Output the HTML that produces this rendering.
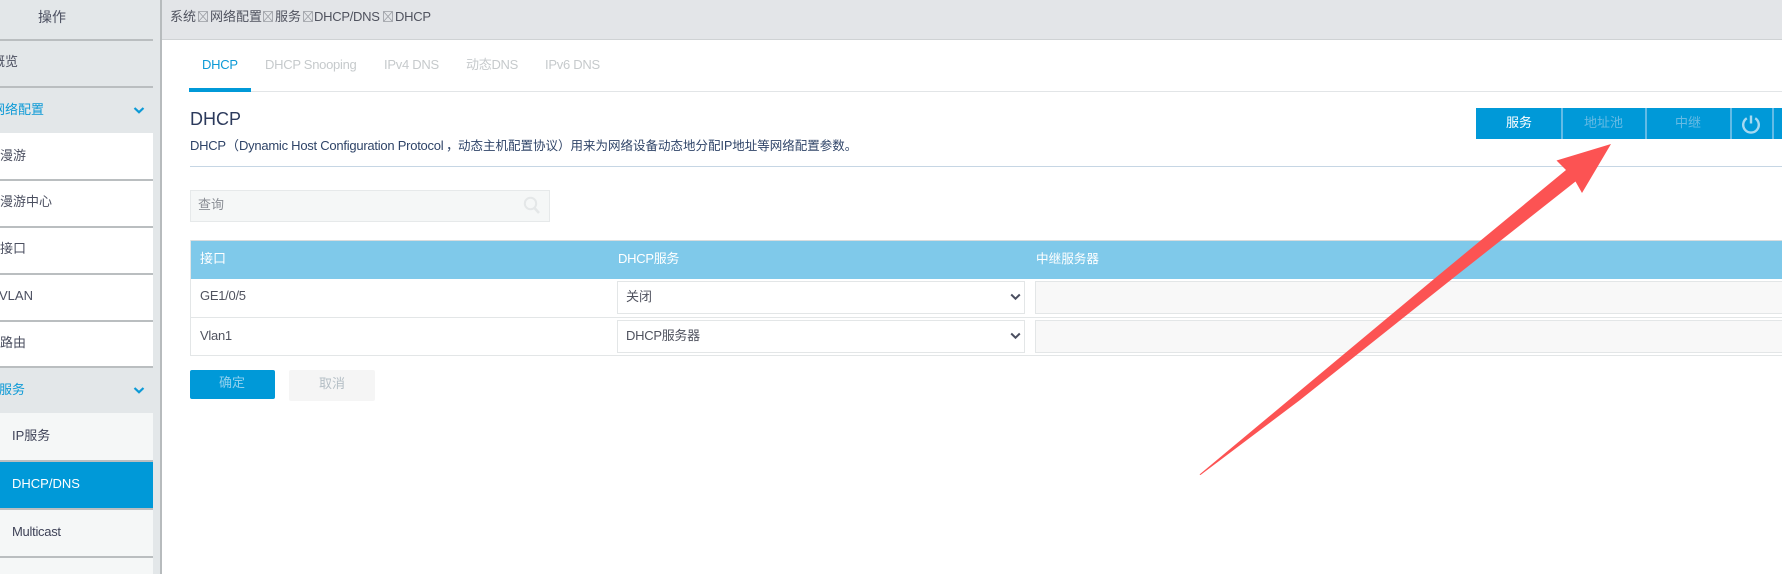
<!DOCTYPE html>
<html lang="zh">
<head>
<meta charset="utf-8">
<title>DHCP</title>
<style>
html,body{margin:0;padding:0;width:1782px;height:574px;overflow:hidden;background:#fff}
body{position:relative;font-family:"Liberation Sans","Noto Sans CJK SC",sans-serif;font-size:13px;color:#4b4f60}
.a{position:absolute}
.t{position:absolute;white-space:nowrap;line-height:20px;height:20px}
.l{letter-spacing:-.28px}
.b{position:absolute;left:0;width:153px;height:2px;background:#babec0}
.sep{position:absolute;top:108px;width:2px;height:31px;background:#62bbe6}
</style>
</head>
<body>
<!-- sidebar background -->
<div class="a" style="left:0;top:0;width:160px;height:574px;background:#e3e7e9"></div>
<div class="a" style="left:160px;top:0;width:2px;height:574px;background:#b7bbbd"></div>
<div class="a" style="left:0;top:133px;width:153px;height:187px;background:#fff"></div>
<div class="a" style="left:0;top:320px;width:153px;height:47px;background:#fff"></div>
<div class="a" style="left:0;top:413px;width:153px;height:161px;background:#f5f7f7"></div>
<div class="a" style="left:0;top:462px;width:153px;height:46px;background:#0099d8"></div>
<div class="b" style="top:39px"></div>
<div class="b" style="top:86px"></div>
<div class="b" style="top:179px"></div>
<div class="b" style="top:226px"></div>
<div class="b" style="top:273px"></div>
<div class="b" style="top:320px"></div>
<div class="b" style="top:366px"></div>
<div class="b" style="top:460px"></div>
<div class="b" style="top:508px"></div>
<div class="b" style="top:556px"></div>

<div class="t" style="left:38px;top:7px;font-size:14px">操作</div>
<div class="t" style="left:-8px;top:52px">概览</div>
<div class="t" style="left:-8px;top:100px;color:#0d9ad6">网络配置</div>
<div class="t" style="left:0;top:146px">漫游</div>
<div class="t" style="left:0;top:192px">漫游中心</div>
<div class="t" style="left:0;top:239px">接口</div>
<div class="t" style="left:-1px;top:286px">VLAN</div>
<div class="t" style="left:0;top:333px">路由</div>
<div class="t" style="left:-1px;top:380px;color:#0d9ad6">服务</div>
<div class="t" style="left:12px;top:426px;color:#3f4358">IP服务</div>
<div class="t" style="left:12px;top:474px;color:#fff">DHCP/DNS</div>
<div class="t l" style="left:12px;top:522px;color:#3f4358">Multicast</div>

<svg class="a" style="left:133px;top:106px" width="12" height="9" viewBox="0 0 12 9"><path d="M1.5 2 L6 6.2 L10.5 2" fill="none" stroke="#0d9ad6" stroke-width="2.2"/></svg>
<svg class="a" style="left:133px;top:386px" width="12" height="9" viewBox="0 0 12 9"><path d="M1.5 2 L6 6.2 L10.5 2" fill="none" stroke="#0d9ad6" stroke-width="2.2"/></svg>

<!-- top breadcrumb -->
<div class="a" style="left:162px;top:0;width:1620px;height:39px;background:#e3e5e8"></div>
<div class="a" style="left:162px;top:39px;width:1620px;height:1px;background:#cfd2d4"></div>
<div class="t" style="left:170px;top:7px;color:#50535f">系统</div>
<svg class="a" style="left:198px;top:11px" width="10" height="11" viewBox="0 0 10 11"><path d="M.5 .5H9.5V10.5H.5ZM.5 .5L9.5 10.5M9.5 .5L.5 10.5" fill="none" stroke="#9a9da3" stroke-width=".8"/></svg>
<div class="t" style="left:210px;top:7px;color:#50535f">网络配置</div>
<svg class="a" style="left:263px;top:11px" width="10" height="11" viewBox="0 0 10 11"><path d="M.5 .5H9.5V10.5H.5ZM.5 .5L9.5 10.5M9.5 .5L.5 10.5" fill="none" stroke="#9a9da3" stroke-width=".8"/></svg>
<div class="t" style="left:275px;top:7px;color:#50535f">服务</div>
<svg class="a" style="left:303px;top:11px" width="10" height="11" viewBox="0 0 10 11"><path d="M.5 .5H9.5V10.5H.5ZM.5 .5L9.5 10.5M9.5 .5L.5 10.5" fill="none" stroke="#9a9da3" stroke-width=".8"/></svg>
<div class="t l" style="left:314px;top:7px;color:#50535f">DHCP/DNS</div>
<svg class="a" style="left:383px;top:11px" width="10" height="11" viewBox="0 0 10 11"><path d="M.5 .5H9.5V10.5H.5ZM.5 .5L9.5 10.5M9.5 .5L.5 10.5" fill="none" stroke="#9a9da3" stroke-width=".8"/></svg>
<div class="t l" style="left:395px;top:7px;color:#50535f">DHCP</div>

<!-- tabs -->
<div class="a" style="left:189px;top:91px;width:1593px;height:1px;background:#e2e5e7"></div>
<div class="a" style="left:189px;top:88px;width:62px;height:4px;background:#0099d8"></div>
<div class="t l" style="left:202px;top:55px;color:#0d9ad6">DHCP</div>
<div class="t l" style="left:265px;top:55px;color:#c6cacc">DHCP Snooping</div>
<div class="t l" style="left:384px;top:55px;color:#c6cacc">IPv4 DNS</div>
<div class="t l" style="left:466px;top:55px;color:#c6cacc">动态DNS</div>
<div class="t l" style="left:545px;top:55px;color:#c6cacc">IPv6 DNS</div>

<!-- heading -->
<div class="t" style="left:190px;top:109px;font-size:18px;color:#2c3a5c">DHCP</div>
<div class="t l" style="left:190px;top:136px;color:#2f4468">DHCP</div>
<div class="t" style="left:226px;top:136px;color:#2f4468">（</div>
<div class="t" style="left:239px;top:136px;color:#2f4468;letter-spacing:-.25px">Dynamic Host Configuration Protocol</div>
<div class="t" style="left:446px;top:136px;color:#2f4468">，</div>
<div class="t" style="left:458px;top:136px;color:#2f4468;font-size:12.5px">动态主机配置协议）用来为网络设备动态地分配IP地址等网络配置参数。</div>
<div class="a" style="left:190px;top:166px;width:1592px;height:1px;background:#c6d6e4"></div>

<!-- function buttons -->
<div class="a" style="left:1476px;top:108px;width:306px;height:31px;background:#0099d8"></div>
<div class="sep" style="left:1561px"></div>
<div class="sep" style="left:1645px"></div>
<div class="sep" style="left:1730px"></div>
<div class="sep" style="left:1772px"></div>
<div class="t" style="left:1506px;top:113px;color:#fff">服务</div>
<div class="t" style="left:1584px;top:113px;color:#66bbe4">地址池</div>
<div class="t" style="left:1675px;top:113px;color:#66bbe4">中继</div>
<svg class="a" style="left:1741px;top:114px" width="20" height="20" viewBox="0 0 20 20"><path d="M5.8 4.2A7.8 7.8 0 1 0 14.2 4.2M10 1.5V9.5" fill="none" stroke="#a6d9f1" stroke-width="2.4"/></svg>

<!-- search -->
<div class="a" style="left:190px;top:190px;width:358px;height:30px;background:#f5f7f7;border:1px solid #e6e9ea"></div>
<div class="t" style="left:198px;top:195px;color:#8a8e95">查询</div>
<svg class="a" style="left:523px;top:196px" width="18" height="19" viewBox="0 0 18 19"><circle cx="7.5" cy="7.5" r="5.7" fill="none" stroke="#e4e7e8" stroke-width="2"/><path d="M11.5 12L16 17" stroke="#e4e7e8" stroke-width="2.6"/></svg>

<!-- table -->
<div class="a" style="left:190px;top:240px;width:1592px;height:1px;background:#d8dcde"></div>
<div class="a" style="left:191px;top:241px;width:1591px;height:38px;background:#7fc9ea"></div>
<div class="a" style="left:190px;top:240px;width:1px;height:116px;background:#e3e6e7"></div>
<div class="a" style="left:190px;top:317px;width:1592px;height:1px;background:#e3e6e7"></div>
<div class="a" style="left:190px;top:355px;width:1592px;height:1px;background:#e3e6e7"></div>
<div class="t" style="left:200px;top:249px;color:#fff">接口</div>
<div class="t l" style="left:618px;top:249px;color:#fff">DHCP服务</div>
<div class="t" style="left:1036px;top:249px;color:#fff;font-size:12.6px">中继服务器</div>
<div class="t l" style="left:200px;top:286px;color:#50535f">GE1/0/5</div>
<div class="t l" style="left:200px;top:326px;color:#50535f">Vlan1</div>

<div class="a" style="left:617px;top:281px;width:406px;height:31px;border:1px solid #e3e6e7;background:#fff"></div>
<div class="a" style="left:617px;top:320px;width:406px;height:31px;border:1px solid #e3e6e7;background:#fff"></div>
<div class="t" style="left:626px;top:287px;color:#50535f">关闭</div>
<div class="t l" style="left:626px;top:326px;color:#50535f">DHCP服务器</div>
<svg class="a" style="left:1010px;top:293px" width="11" height="8" viewBox="0 0 11 8"><path d="M1.2 1.5L5.5 5.7L9.8 1.5" fill="none" stroke="#4b4f60" stroke-width="2"/></svg>
<svg class="a" style="left:1010px;top:332px" width="11" height="8" viewBox="0 0 11 8"><path d="M1.2 1.5L5.5 5.7L9.8 1.5" fill="none" stroke="#4b4f60" stroke-width="2"/></svg>
<div class="a" style="left:1035px;top:281px;width:760px;height:31px;border:1px solid #e3e6e7;background:#f8f8f8"></div>
<div class="a" style="left:1035px;top:320px;width:760px;height:31px;border:1px solid #e3e6e7;background:#f8f8f8"></div>

<!-- buttons -->
<div class="a" style="left:190px;top:370px;width:85px;height:29px;background:#0099d8;border-radius:2px"></div>
<div class="t" style="left:219px;top:373px;color:#8fd0ee">确定</div>
<div class="a" style="left:289px;top:370px;width:86px;height:31px;background:#f5f5f5;border-radius:2px"></div>
<div class="t" style="left:319px;top:374px;color:#b4bec5">取消</div>

<!-- annotation arrow -->
<svg class="a" style="left:0;top:0" width="1782" height="574" viewBox="0 0 1782 574"><path d="M1199.5 474.5L1434 279L1566 170L1556.5 160.5L1611 144L1582 193L1575.5 181.5L1452 279L1300 400L1200.5 475Z" fill="#fc5353"/></svg>
</body>
</html>
